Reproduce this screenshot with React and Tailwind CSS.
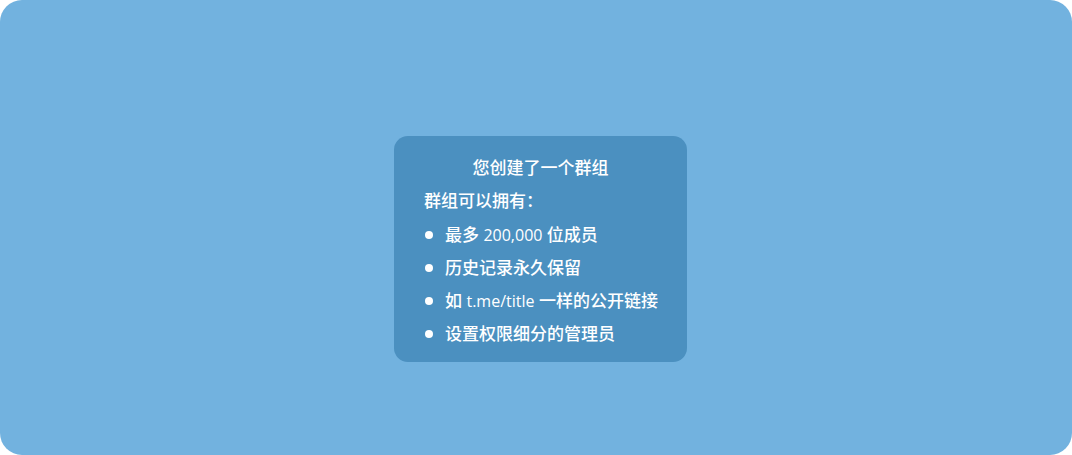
import React from "react";

// latin parts are set a touch smaller than the CJK glyphs, as in the original
const perks = [
    ["最多 ", <span key="n" className="text-[16px]">200,000</span>, " 位成员"],
    ["历史记录永久保留"],
    ["如 ", <span key="l" className="text-[16px]">t.me/title</span>, " 一样的公开链接"],
    ["设置权限细分的管理员"],
];

export default function App() {
    return (
        <div className="w-[1072px] h-[455px] bg-white">
            <div
                className="w-full h-full rounded-[22px] bg-[#72b2df] flex items-center justify-center"
                style={{ fontFamily: '"Open Sans", "Noto Sans CJK SC", sans-serif' }}
            >
                <div className="w-[293px] h-[226px] rounded-[14px] bg-[#4b90c0] text-white pt-[21px] pl-[30px] pr-[16px] ml-[9px] mt-[43px]">
                    <div className="text-center -ml-[14px] text-[17px] leading-[22px] font-medium">您创建了一个群组</div>
                    <div className="mt-[11px] text-[17px] leading-[22px] font-medium">群组可以拥有：</div>
                    <div className="mt-[12px] flex flex-col gap-[11px]">
                        {perks.map((p, i) => (
                            <div key={i} className="flex items-center h-[22px] text-[17px] leading-[22px] font-medium">
                                <span className="w-[8px] h-[8px] rounded-full bg-white ml-[1px] mr-[12px] shrink-0" />
                                <span className="whitespace-nowrap">{p}</span>
                            </div>
                        ))}
                    </div>
                </div>
            </div>
        </div>
    );
}
